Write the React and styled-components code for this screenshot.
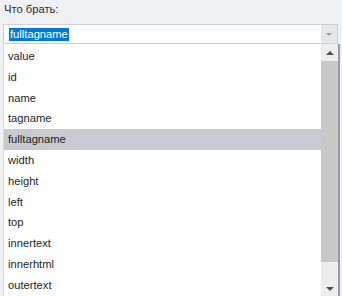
import React from "react";
import styled, { createGlobalStyle } from "styled-components";

const Global = createGlobalStyle`
  html, body {
    margin: 0;
    padding: 0;
    background: #f0f1f5;
    overflow: hidden;
  }
  body {
    font-family: "Liberation Sans", Arial, sans-serif;
    font-size: 11.2px;
    color: #1e1e1e;
  }
`;

const Panel = styled.div`
  width: 342px;
  height: 296px;
  padding: 0 3px 0 3px;
  box-sizing: border-box;
`;

const Label = styled.div`
  height: 24px;
  line-height: 18px;
  padding-left: 1px;
  color: #2b2b2b;
`;

const Combo = styled.div`
  display: flex;
  height: 20px;
  width: 335px;
  box-sizing: border-box;
  border: 1px solid #cdd0d8;
  background: #fff;
`;

const ComboInput = styled.div`
  flex: 1;
  display: flex;
  align-items: center;
  padding-left: 5px;
`;

const Selected = styled.span`
  background: #0078d7;
  color: #fff;
  line-height: 13px;
  padding: 0 1px;
`;

const ComboButton = styled.div`
  width: 16px;
  background: #e6e7eb;
  display: flex;
  align-items: center;
  justify-content: center;
`;

const Arrow = styled.div`
  width: 0;
  height: 0;
  border-left: ${p => p.$size}px solid transparent;
  border-right: ${p => p.$size}px solid transparent;
  ${p =>
    p.$up
      ? `border-bottom: ${p.$size}px solid ${p.$color};`
      : `border-top: ${p.$size}px solid ${p.$color};`}
`;

const List = styled.div`
  display: flex;
  width: 337px;
  height: 253px;
  box-sizing: border-box;
  border-left: 1px solid #d6d8de;
  border-right: 2px solid #9a9a9a;
  background: #fff;
`;

const Items = styled.div`
  flex: 1;
  padding-top: 2px;
`;

const Item = styled.div`
  height: 20.8px;
  line-height: 20.8px;
  padding-left: 4px;
  background: ${p => (p.$active ? "#c9cacf" : "transparent")};
`;

const Scrollbar = styled.div`
  width: 17px;
  display: flex;
  flex-direction: column;
  background: #ededed;
`;

const ScrollButton = styled.div`
  height: 17px;
  flex-shrink: 0;
  display: flex;
  align-items: center;
  justify-content: center;
`;

const Thumb = styled.div`
  height: 201px;
  flex-shrink: 0;
  background: #c8c8c8;
`;

const Track = styled.div`
  flex: 1;
`;

const items = [
  "value",
  "id",
  "name",
  "tagname",
  "fulltagname",
  "width",
  "height",
  "left",
  "top",
  "innertext",
  "innerhtml",
  "outertext"
];

export default function App() {
  return (
    <Panel>
      <Global />
      <Label>Что брать:</Label>
      <Combo>
        <ComboInput>
          <Selected>fulltagname</Selected>
        </ComboInput>
        <ComboButton>
          <Arrow $size={3} $color="#9a9ba0" />
        </ComboButton>
      </Combo>
      <List>
        <Items>
          {items.map(name => (
            <Item key={name} $active={name === "fulltagname"}>
              {name}
            </Item>
          ))}
        </Items>
        <Scrollbar>
          <ScrollButton>
            <Arrow $up $size={4} $color="#505050" />
          </ScrollButton>
          <Thumb />
          <Track />
          <ScrollButton>
            <Arrow $size={4} $color="#505050" />
          </ScrollButton>
        </Scrollbar>
      </List>
    </Panel>
  );
}
